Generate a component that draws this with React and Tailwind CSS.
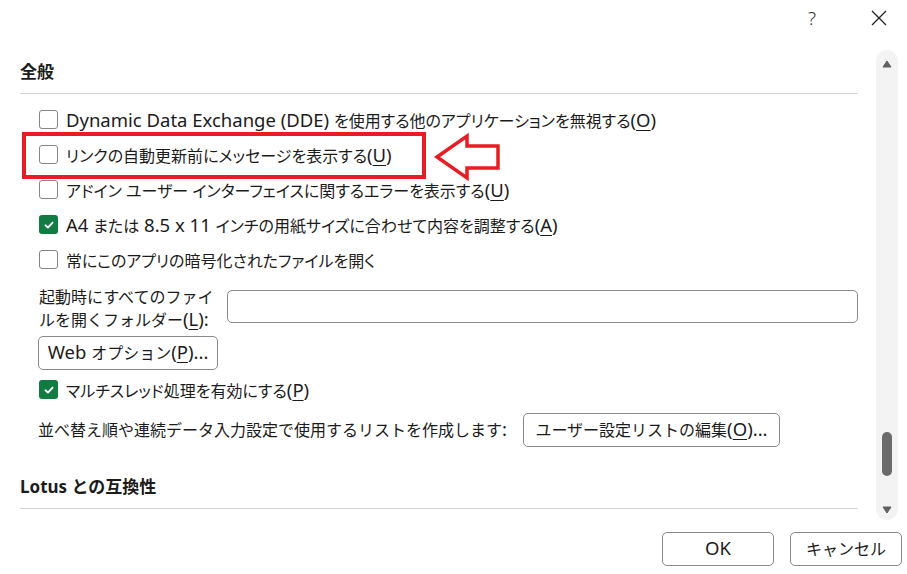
import React from 'react';

// Latin runs are set a little larger than the kana/kanji around them
function L({ children }) {
  return <span className="text-[18.5px] leading-none">{children}</span>;
}

function Checkbox({ checked }) {
  if (checked) {
    return (
      <span className="w-[19px] h-[19px] rounded-[3px] bg-[#107c41] flex items-center justify-center shrink-0">
        <svg width="12" height="12" viewBox="0 0 12 12">
          <path d="M2.4 6.3 L4.9 8.6 L9.6 3.6" fill="none" stroke="white" strokeWidth="1.9" strokeLinecap="round" strokeLinejoin="round" />
        </svg>
      </span>
    );
  }
  return <span className="w-[19px] h-[19px] rounded-[3px] border-[1.5px] border-[#868686] bg-white shrink-0" />;
}

function Key({ k }) {
  return (
    <L>
      (<span className="underline underline-offset-[3px] decoration-1">{k}</span>)
    </L>
  );
}

function CheckRow({ checked, children }) {
  return (
    <div className="h-[35px] flex items-center gap-[8px] pl-[19px]">
      <Checkbox checked={checked} />
      <span className="whitespace-nowrap pt-[2px] [font-feature-settings:'palt']">{children}</span>
    </div>
  );
}

function SectionTitle({ children }) {
  return <div className="text-[17px] font-bold leading-[24px] text-[#1b1b1b]">{children}</div>;
}

function Scrollbar() {
  return (
    <div className="w-[22px] h-full rounded-full bg-[#f3f3f3] flex flex-col items-center">
      <svg className="mt-[10px]" width="10" height="8" viewBox="0 0 10 8">
        <path d="M5 1 L9 7 L1 7 Z" fill="#606060" stroke="#606060" strokeWidth="1" strokeLinejoin="round" />
      </svg>
      <div className="mt-[364px] w-[10px] h-[44px] rounded-full bg-[#6b6b6b]" />
      <svg className="mt-[30px]" width="10" height="8" viewBox="0 0 10 8">
        <path d="M1 1 L9 1 L5 7 Z" fill="#606060" stroke="#606060" strokeWidth="1" strokeLinejoin="round" />
      </svg>
    </div>
  );
}

export default function App() {
  return (
    <div className="relative w-[907px] h-[574px] bg-white text-[16px] leading-[24px] text-[#1b1b1b] font-['Noto_Sans','Noto_Sans_CJK_JP',sans-serif] overflow-hidden">
      {/* title bar */}
      <div className="h-[36px] flex justify-end items-center pr-[19px]">
        <span className="text-[19px] font-light text-[#333]">?</span>
        <svg className="ml-[54px]" width="18" height="18" viewBox="0 0 18 18">
          <path d="M2 2 L16 16 M16 2 L2 16" stroke="#222" strokeWidth="1.3" />
        </svg>
      </div>

      {/* options body */}
      <div className="mt-[14px] h-[470px] flex">
        <div className="w-[858px] pl-[20px]">
          <div className="mt-[10px]">
            <SectionTitle>全般</SectionTitle>
          </div>
          <div className="mt-[9px] h-px bg-[#d4d4d4]" />

          <div className="mt-[8px]">
            <CheckRow><L>Dynamic Data Exchange (DDE) </L>を使用する他のアプリケーションを無視する<Key k="O" /></CheckRow>
            <CheckRow>リンクの自動更新前にメッセージを表示する<Key k="U" /></CheckRow>
            <CheckRow>アドイン ユーザー インターフェイスに関するエラーを表示する<Key k="U" /></CheckRow>
            <CheckRow checked><L>A4 </L>または<L> 8.5 x 11 </L>インチの用紙サイズに合わせて内容を調整する<Key k="A" /></CheckRow>
            <CheckRow>常にこのアプリの暗号化されたファイルを開く</CheckRow>
          </div>

          <div className="mt-[8px] flex">
            <div className="w-[207px] h-[46px] pl-[19px] leading-[23px] pt-[1px]">
              起動時にすべてのファイ
              <br />
              ルを開くフォルダー<Key k="L" /><L>:</L>
            </div>
            <div className="flex-1 h-[33px] mt-[5px] border border-[#8a8a8a] rounded-[5px]" />
          </div>

          <button className="mt-[5px] ml-[18px] w-[180px] h-[34px] flex items-center justify-center border border-[#8a8a8a] rounded-[5px] bg-white">
            <span><L>Web </L>オプション<Key k="P" /><L>...</L></span>
          </button>

          <div className="mt-[2px]">
            <CheckRow checked>マルチスレッド処理を有効にする<Key k="P" /></CheckRow>
          </div>

          <div className="mt-[6px] h-[34px] flex items-center">
            <div className="w-[503px] pl-[18px] whitespace-nowrap">
              並べ替え順や連続データ入力設定で使用するリストを作成します<L>:</L>
            </div>
            <button className="w-[257px] h-[34px] flex items-center justify-center border border-[#8a8a8a] rounded-[5px] bg-white">
              <span>ユーザー設定リストの編集<Key k="O" /><L>...</L></span>
            </button>
          </div>

          <div className="mt-[28px]">
            <SectionTitle>Lotus との互換性</SectionTitle>
          </div>
          <div className="mt-[9px] h-px bg-[#d4d4d4]" />
        </div>
        <div className="ml-[18px] h-full">
          <Scrollbar />
        </div>
      </div>

      {/* footer */}
      <div className="mt-[12px] flex justify-end gap-[16px] pr-[5px]">
        <button className="w-[112px] h-[34px] border border-[#8a8a8a] rounded-[5px] bg-white"><L>OK</L></button>
        <button className="w-[112px] h-[34px] border border-[#8a8a8a] rounded-[5px] bg-white">キャンセル</button>
      </div>

      {/* highlight frame and pointer arrow */}
      <div className="absolute left-[22px] top-[132px] w-[404px] h-[47px] border-[4px] border-[#e81c24]" />
      <svg className="absolute left-[432px] top-[132px]" width="72" height="50" viewBox="0 0 72 50">
        <polygon points="5,25 35,4 35,14 66,14 66,36 35,36 35,46" fill="white" stroke="#e81c24" strokeWidth="3.5" strokeLinejoin="miter" />
      </svg>
    </div>
  );
}
